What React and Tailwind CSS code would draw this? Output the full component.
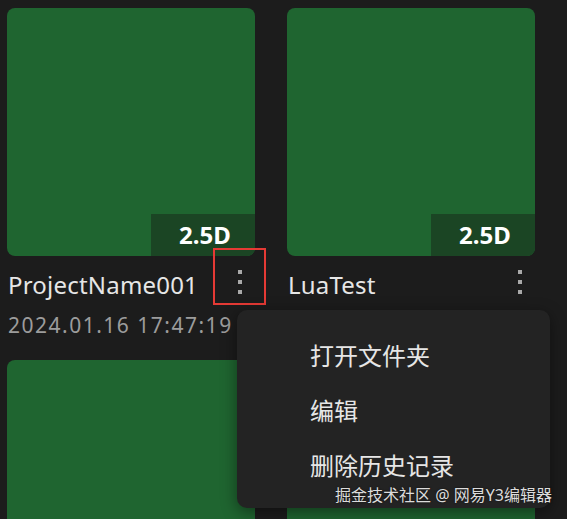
const projects = [
  { name: 'ProjectName001', date: '2024.01.16 17:47:19', tag: '2.5D', active: true },
  { name: 'LuaTest', date: '', tag: '2.5D' },
  { name: '', date: '', tag: '' },
  { name: '', date: '', tag: '' },
];

const font = { fontFamily: '"Noto Sans", "Noto Sans CJK SC", sans-serif' };

const Dots = () => (
  <div className="flex flex-col gap-[6px]">
    <span className="block w-[4px] h-[4px] bg-[#a9a9a9]" />
    <span className="block w-[4px] h-[4px] bg-[#a9a9a9]" />
    <span className="block w-[4px] h-[4px] bg-[#a9a9a9]" />
  </div>
);

const ProjectCard = ({ project }) => (
  <div className="w-[248px]">
    <div className="relative w-[248px] h-[248px] rounded-[8px] bg-[#1f6530] overflow-hidden">
      {project.tag && (
        <div className="absolute right-0 bottom-0 w-[104px] h-[42px] bg-[#1b4524] flex items-center justify-center text-white font-bold text-[24px]">
          <span className="pl-[4px]">{project.tag}</span>
        </div>
      )}
    </div>
    <div className="mt-[12px] h-[34px] flex items-center justify-between pl-[1px] pr-[9px]">
      <span className="text-[24px] tracking-[0.2px] text-[#e6e6e6]">{project.name}</span>
      <div className="relative top-[-3px] flex items-center justify-center w-[12px]">
        {project.active && (
          <div className="absolute left-[-21px] top-[-22px] w-[53px] h-[57px] border-2 border-[#e53a35]" />
        )}
        <Dots />
      </div>
    </div>
    <div className="mt-[9px] h-[28px] pl-[1px] text-[21px] tracking-[1.5px] leading-[28px] text-[#9c9c9c]">{project.date}</div>
  </div>
);

const App = () => {
  return (
    <div className="relative w-[567px] h-[519px] overflow-hidden bg-[#1c1c1c]" style={font}>
      <div className="grid grid-cols-[248px_248px] gap-x-[32px] gap-y-[21px] pl-[7px] pt-[8px]">
        {projects.map((p, i) => (
          <ProjectCard key={i} project={p} />
        ))}
      </div>

      <div className="absolute left-[237px] top-[310px] w-[313px] h-[198px] rounded-[10px] bg-[#232323] shadow-[0_4px_16px_rgba(0,0,0,0.45)] pl-[73px] pt-[30px] flex flex-col gap-[23px] text-[24px] leading-[32px] text-[#e6e6e6]">
        <div>打开文件夹</div>
        <div>编辑</div>
        <div>删除历史记录</div>
      </div>

      <div className="absolute right-[15px] bottom-[13px] text-[16px] leading-[22px] text-[#dcdcdc] [text-shadow:0_0_2px_rgba(0,0,0,0.6)]">
        掘金技术社区 @ 网易Y3编辑器
      </div>
    </div>
  );
};

export default App;
